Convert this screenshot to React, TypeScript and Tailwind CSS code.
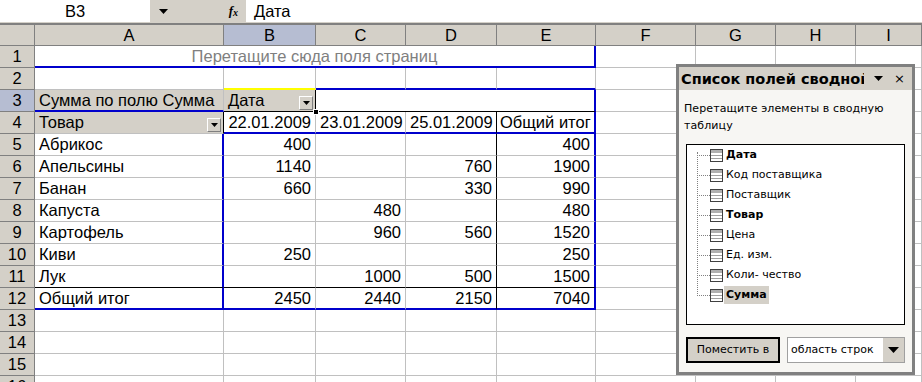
import React from 'react'

const gr = 'border-r border-r-[#c0c0c0]'
const gb = 'border-b border-b-[#c0c0c0]'
const br = 'border-r-2 border-r-[#0000cc]'
const bb = 'border-b-2 border-b-[#0000cc]'
const kr = 'border-r border-r-black'
const kb = 'border-b border-b-black'
const yb = 'border-b-2 border-b-[#ffff00]'

const cols = ['A', 'B', 'C', 'D', 'E', 'F', 'G', 'H', 'I']

function Cell({ r = gr, b = gb, className = '', children }: { r?: string; b?: string; className?: string; children?: React.ReactNode }) {
  return (
    <div className={`relative h-[22px] overflow-visible whitespace-nowrap px-[4px] leading-[21px] ${r} ${b} ${className}`}>
      {children}
    </div>
  )
}

function RowHead({ n, active }: { n: number; active?: boolean }) {
  return (
    <div className={`h-[22px] text-center leading-[21px] border-r border-b border-[#808080] ${active ? 'bg-[#b6bdd2]' : 'bg-[#d4d0c8]'}`}>
      {n}
    </div>
  )
}

function DropBtn() {
  return (
    <span className="absolute right-[2px] bottom-[1px] w-[14px] h-[14px] bg-[#d4d0c8] border border-t-white border-l-white border-r-[#808080] border-b-[#808080] flex items-center justify-center">
      <svg width="7" height="4" viewBox="0 0 7 4"><path d="M0 0h7L3.5 4z" fill="#000" /></svg>
    </span>
  )
}

function Blank({ b = gb }: { b?: string }) {
  return <Cell b={b} />
}

const data: [string, string, string, string, string][] = [
  ['Абрикос', '400', '', '', '400'],
  ['Апельсины', '1140', '', '760', '1900'],
  ['Банан', '660', '', '330', '990'],
  ['Капуста', '', '480', '', '480'],
  ['Картофель', '', '960', '560', '1520'],
  ['Киви', '250', '', '', '250'],
  ['Лук', '', '1000', '500', '1500'],
]

function FieldIcon() {
  return (
    <svg width="13" height="13" viewBox="0 0 13 13" className="shrink-0">
      <rect x="0.5" y="0.5" width="12" height="12" fill="#fff" stroke="#404040" />
      <rect x="1" y="1" width="11" height="3" fill="#b0b0b0" />
      <line x1="1" y1="6.5" x2="12" y2="6.5" stroke="#a0a0a0" />
      <line x1="1" y1="9.5" x2="12" y2="9.5" stroke="#a0a0a0" />
    </svg>
  )
}

const fields: { t: string; bold?: boolean; sel?: boolean }[] = [
  { t: 'Дата', bold: true },
  { t: 'Код поставщика' },
  { t: 'Поставщик' },
  { t: 'Товар', bold: true },
  { t: 'Цена' },
  { t: 'Ед. изм.' },
  { t: 'Коли- чество' },
  { t: 'Сумма', bold: true, sel: true },
]

function FieldList() {
  return (
    <div className="absolute left-[676px] top-[64px] w-[239px] h-[311px] border-[3px] border-[#808080] bg-[#f7f6f3] flex flex-col font-['DejaVu_Sans',sans-serif] text-[11px] text-black">
      <div className="h-[23px] bg-[#d4d0c8] flex items-center pl-[2px] pr-[7px]">
        <div className="w-[183px] shrink-0 overflow-hidden whitespace-nowrap font-bold text-[14.5px] leading-[20px]">Список полей сводной</div>
        <svg width="9" height="5" viewBox="0 0 9 5" className="ml-[10px]"><path d="M0 0h9L4.5 5z" fill="#000" /></svg>
        <span className="ml-auto text-[13px] leading-none">×</span>
      </div>
      <div className="px-[5px] pt-[10px] leading-[17px] tracking-[0.1px]">Перетащите элементы в сводную таблицу</div>
      <div className="mx-[7px] mt-[10px] h-[181px] bg-white border border-black relative">
        <div className="absolute left-[10px] top-[7px] h-[144px] border-l border-dotted border-[#808080]" />
        {fields.map(f => (
          <div key={f.t} className="h-[20px] flex items-center pl-[10px]">
            <span className="w-[13px] border-t border-dotted border-[#808080]" />
            <FieldIcon />
            <span className={`ml-[1px] px-[2px] leading-[18px] ${f.bold ? 'font-bold' : ''} ${f.sel ? 'bg-[#d4d0c8]' : ''}`}>{f.t}</span>
          </div>
        ))}
      </div>
      <div className="mx-[7px] mt-[12px] flex items-center h-[26px]">
        <button className="w-[94px] h-[26px] border-2 border-black bg-[#d4d0c8] text-[11px]">Поместить в</button>
        <div className="ml-[7px] flex-1 h-[26px] flex border border-[#a0a0a0] bg-white">
          <span className="flex-1 pl-[3px] leading-[24px]">область строк</span>
          <span className="w-[21px] bg-[#d4d0c8] flex items-center justify-center">
            <svg width="11" height="6" viewBox="0 0 11 6"><path d="M0 0h11L5.5 6z" fill="#000" /></svg>
          </span>
        </div>
      </div>
    </div>
  )
}

export default function App() {
  return (
    <div className="relative w-[922px] h-[382px] overflow-hidden bg-white font-['Liberation_Sans',Arial,sans-serif] text-[16.5px] text-black">
      {/* formula bar */}
      <div className="h-[25px] bg-[#d4d0c8] border-b-2 border-[#808080] flex">
        <div className="w-[150px] h-[22px] bg-white text-center leading-[22px]">B3</div>
        <div className="w-[26px] h-[22px] flex items-center justify-center">
          <svg width="9" height="5" viewBox="0 0 9 5"><path d="M0 0h9L4.5 5z" fill="#000" /></svg>
        </div>
        <div className="w-[70px] h-[22px] flex items-center justify-end pr-[8px] font-['Liberation_Serif',serif] italic text-[13px] font-bold">
          f<span className="text-[10px] mt-[3px]">x</span>
        </div>
        <div className="flex-1 h-[22px] bg-white pl-[8px] leading-[22px]">Дата</div>
      </div>

      {/* sheet */}
      <div className="grid grid-cols-[35px_189px_92px_90px_91px_99px_100px_80px_80px_66px]">
        <div className="h-[21px] bg-[#d4d0c8] border-r border-b border-[#808080]" />
        {cols.map(c => (
          <div key={c} className={`h-[21px] text-center leading-[20px] border-r border-b border-[#808080] ${c === 'B' ? 'bg-[#b6bdd2]' : 'bg-[#d4d0c8]'}`}>{c}</div>
        ))}

        {/* row 1 */}
        <RowHead n={1} />
        <Cell r={br} b={bb} className="col-span-5 text-center text-[#808080]">Перетащите сюда поля страниц</Cell>
        <Blank /><Blank /><Blank /><Blank />

        {/* row 2 */}
        <RowHead n={2} />
        <Blank />
        <Cell b={yb} />
        <Cell b={bb} /><Cell b={bb} /><Cell b={bb} />
        <Blank /><Blank /><Blank /><Blank />

        {/* row 3 */}
        <RowHead n={3} active />
        <Cell b={bb} className="bg-[#d4d0c8]">Сумма по полю Сумма</Cell>
        <Cell r={kr} b={kb} className="bg-[#d4d0c8]">
          Дата
          <DropBtn />
          <span className="absolute -right-[4px] -bottom-[4px] w-[6px] h-[6px] bg-black border border-white z-10" />
        </Cell>
        <Cell r={br} b={kb} className="col-span-3" />
        <Blank /><Blank /><Blank /><Blank />

        {/* row 4 */}
        <RowHead n={4} />
        <Cell r={kr} className="bg-[#d4d0c8]">Товар<DropBtn /></Cell>
        <Cell b={bb} className="text-right">22.01.2009</Cell>
        <Cell b={bb} className="text-right">23.01.2009</Cell>
        <Cell r={kr} b={bb} className="text-right">25.01.2009</Cell>
        <Cell r={br} b={bb} className="pl-[3px]">Общий итог</Cell>
        <Blank /><Blank /><Blank /><Blank />

        {data.map((d, i) => {
          const last = i === data.length - 1
          const b = last ? kb : gb
          return (
            <React.Fragment key={d[0]}>
              <RowHead n={5 + i} />
              <Cell r={br} b={b}>{d[0]}</Cell>
              <Cell b={b} className="text-right">{d[1]}</Cell>
              <Cell b={b} className="text-right">{d[2]}</Cell>
              <Cell r={kr} b={b} className="text-right">{d[3]}</Cell>
              <Cell r={br} b={b} className="text-right">{d[4]}</Cell>
              <Blank /><Blank /><Blank /><Blank />
            </React.Fragment>
          )
        })}

        {/* row 12 */}
        <RowHead n={12} />
        <Cell r={br} b={bb}>Общий итог</Cell>
        <Cell b={bb} className="text-right">2450</Cell>
        <Cell b={bb} className="text-right">2440</Cell>
        <Cell r={kr} b={bb} className="text-right">2150</Cell>
        <Cell r={br} b={bb} className="text-right">7040</Cell>
        <Blank /><Blank /><Blank /><Blank />

        {[13, 14, 15, 16].map(n => (
          <React.Fragment key={n}>
            <RowHead n={n} />
            {cols.map(c => <Blank key={c} />)}
          </React.Fragment>
        ))}
      </div>

      <FieldList />
    </div>
  )
}
